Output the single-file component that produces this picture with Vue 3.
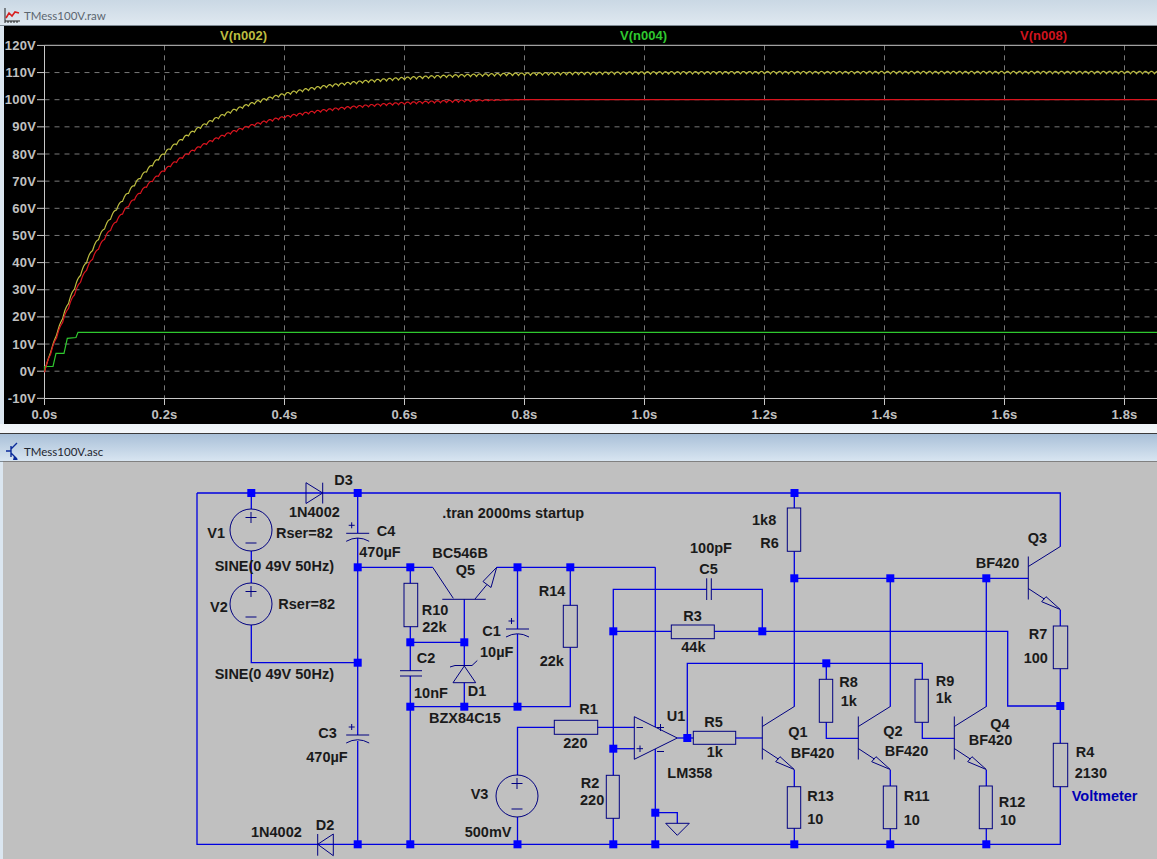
<template>
  <div class="desktop">
    <section class="win plot-win">
      <header class="titlebar">
        <svg class="ticon" viewBox="0 0 16 16" width="16" height="16">
          <path d="M1 1V14H16M1 14v2M4 14v2M7 14v2M10 14v2M13 14v2" fill="none" stroke="#222" stroke-width="1" />
          <path d="M2 11L5 6l3 3 3-4 4 1" fill="none" stroke="#d81e1e" stroke-width="1.6" />
        </svg>
        <span class="title dim">TMess100V.raw</span>
      </header>
      <div class="body plot-body">
        <svg class="canvas" viewBox="4 26 1153 398" width="1153" height="398">
          <g class="grid">
            <line v-for="v in gridVolts" :key="v" x1="44.5" x2="1157" :y1="vy(v)" :y2="vy(v)" />
            <line v-for="t in timeTicks.slice(1)" :key="t" :x1="tx(t)" :x2="tx(t)" y1="45.3" y2="398.5" />
          </g>
          <g class="axis">
            <line x1="44.5" x2="1157" y1="45.3" y2="45.3" />
            <line x1="44.5" x2="1157" y1="398.5" y2="398.5" />
            <line x1="44.5" x2="44.5" y1="45.3" y2="398.5" />
            <line v-for="v in allVolts" :key="v" x1="37" x2="44.5" :y1="vy(v)" :y2="vy(v)" />
            <line v-for="t in timeTicks" :key="t" :x1="tx(t)" :x2="tx(t)" y1="398.5" y2="405" />
          </g>
          <text v-for="v in allVolts" :key="v" class="lbl" x="36" :y="vy(v) + 4.5" text-anchor="end">{{ v }}V</text>
          <text v-for="t in timeTicks" :key="t" class="lbl" :x="tx(t)" y="418.5" text-anchor="middle">{{ t.toFixed(1) }}s</text>
          <polyline class="trace" :points="tracePts(110, 0.153, 0.9, false)" stroke="#bcbc40" />
          <polyline class="trace" points="44.5,371 44.5,366.5 53,366.5 56,353.3 64,353.3 67.3,338.3 76,337.5 78,332.3 1157,332.3" stroke="#2fc82f" />
          <polyline class="trace" :points="tracePts(100.5, 0.15, 0.8, true)" stroke="#d8141e" />
          <text class="sig" x="220" y="40" fill="#bcbc40">V(n002)</text>
          <text class="sig" x="620" y="40" fill="#2fc82f">V(n004)</text>
          <text class="sig" x="1020" y="40" fill="#d0141e">V(n008)</text>
        </svg>
      </div>
    </section>

    <section class="win sch-win">
      <header class="titlebar active">
        <svg class="ticon" viewBox="0 0 16 18" width="16" height="18">
          <path d="M2 9h5M7 4v11M7 7l6-6M7 11l6 6" fill="none" stroke="#0a2a9a" stroke-width="1.4" />
          <path d="M10 14l4 4-5 0z" fill="#0a2a9a" />
        </svg>
        <span class="title">TMess100V.asc</span>
      </header>
      <div class="body sch-body">
        <svg class="canvas" viewBox="3 462 1154 397" width="1154" height="397">
          <g class="wires">
            <polyline v-for="w in wires" :key="w" :points="w" />
          </g>
          <g class="sym">
            <rect v-for="r in resistors" :key="r.join()" :x="r[0]" :y="r[1]" :width="r[2]" :height="r[3]" />
            <circle v-for="s in sources" :key="s[1]" :cx="s[0]" :cy="s[1]" r="21" />
            <path v-for="s in sources" :key="s[1]" :d="sourceMarks(s)" />
            <path v-for="c in polarCaps" :key="c[1]" :d="capMarks(c)" />
            <path v-for="q in bipolars" :key="q[0]" :d="bipolarPath(q)" />
            <!-- Q5 is the only pnp, drawn by hand -->
            <path d="M442.3 599.3H485.7M432.7 567.3L453.3 598.3M475 599L487 584.5" />
            <polygon points="496.7,567.3 483,581.5 491,587.5" />
            <!-- diodes D3 D2, zener D1 -->
            <path d="M306 482.7V503.5L322.7 493ZM322.7 482.7V503.5" />
            <path d="M333.3 834V855.7L317.7 844.3ZM317.7 834V855.7" />
            <path d="M453 682.7H475.7L464.3 666ZM450 667L455 665.5H472L477.3 660.5" />
            <!-- non polar caps C2, C5 -->
            <path d="M400 670.7H422M400 676H422M706.7 578.3V600M711.3 578.3V600" />
            <!-- op amp -->
            <polygon points="634.3,716.7 634.3,759.3 677.3,738" />
            <path d="M636.5 727.5H643M636.5 748.7H643M640 745.5V752M657 727.5H664M660.5 724V731M657 751.5H664" />
            <!-- ground -->
            <polygon points="665.7,823.3 689.3,823.3 677.3,835.3" />
          </g>
          <g class="dots">
            <rect v-for="j in junctions" :key="j.join()" :x="j[0] - 4" :y="j[1] - 4" width="8" height="8" />
          </g>
          <text v-for="t in labels" :key="t.join()" class="part" :x="t[1]" :y="t[2]">{{ t[0] }}</text>
          <text class="part net" x="1071.7" y="800.7">Voltmeter</text>
        </svg>
      </div>
    </section>
  </div>
</template>

<script setup>
const allVolts = [120, 110, 100, 90, 80, 70, 60, 50, 40, 30, 20, 10, 0, -10]
const gridVolts = allVolts.slice(1, -1)
const timeTicks = [0, 0.2, 0.4, 0.6, 0.8, 1.0, 1.2, 1.4, 1.6, 1.8]

const vy = (v) => 371.2 - v * 2.715
const tx = (t) => 44.5 + t * 600

// rc charge curve with 100Hz rectifier ripple; the regulated one clamps flat
function tracePts(vmax, tau, ripple, clamp) {
  const pts = []
  for (let px = 0; px <= 1113; px += 0.5) {
    const t = px / 600
    let v = vmax * (1 - Math.exp(-t / tau))
    const wave = Math.abs(Math.sin(2 * Math.PI * 50 * t)) - 0.5
    if (clamp) {
      v = Math.min(100, v + wave * ripple * Math.min(1, (100 - v) / 0.5))
    } else {
      v += wave * ripple * Math.min(1, t * 30)
    }
    pts.push(`${(44.5 + px).toFixed(1)},${vy(v).toFixed(1)}`)
  }
  return pts.join(' ')
}

const wires = [
  '197,493 1060.3,493 1060.3,546.7',
  '197,493 197,844.3 1060.3,844.3 1060.3,786.7',
  '251.3,493 251.3,509', '251.3,551 251.3,583', '251.3,625 251.3,662.7 357.7,662.7',
  '357.7,493 357.7,533', '357.7,538 357.7,735', '357.7,741 357.7,844.3',
  '357.7,567.3 432.7,567.3', '496.7,567.3 655.3,567.3',
  '410.3,567.3 410.3,583.3', '410.3,626.7 410.3,670.7', '410.3,676 410.3,844.3',
  '410.3,642.3 464.3,642.3', '464.3,599.3 464.3,666', '464.3,682.7 464.3,706.7',
  '410.3,706.7 570.3,706.7 570.3,647.3', '570.3,605.3 570.3,567.3',
  '517.5,567.3 517.5,629', '517.5,634 517.5,706.7',
  '655.3,567.3 655.3,727', '655.3,749 655.3,844.3', '655.3,812.7 677.3,812.7 677.3,823.3',
  '517.5,775 517.5,727.3 554.3,727.3', '597.7,727.3 634.3,727.3', '517.5,817 517.5,844.3',
  '613.3,748.7 634.3,748.7', '613.3,775.3 613.3,589.3 706.7,589.3', '613.3,818.3 613.3,844.3',
  '711.3,589.3 762.3,589.3 762.3,631.3',
  '613.3,631.3 671.3,631.3', '714.3,631.3 1007.7,631.3 1007.7,706 1060.3,706',
  '1060.3,610 1060.3,626', '1060.3,668.7 1060.3,743.3',
  '794.3,493 794.3,508', '794.3,551.3 794.3,706.7', '794.3,770 794.3,786.7', '794.3,828.3 794.3,844.3',
  '794.3,578.3 1028.3,578.3',
  '890.3,578.3 890.3,706.7', '890.3,770 890.3,786', '890.3,828.7 890.3,844.3',
  '986.3,578.3 986.3,706.7', '986.3,770 986.3,786', '986.3,828.7 986.3,844.3',
  '687.3,738 687.3,663.3 922.3,663.3 922.3,679.3', '826.3,663.3 826.3,679.3',
  '826.3,722.3 826.3,738.3 858.3,738.3', '922.3,722.3 922.3,738.3 954.3,738.3',
  '677.3,738 693.3,738', '735.7,738 762.3,738',
]

const junctions = [
  [251.3, 493], [357.7, 493], [794.5, 493], [357.7, 567.3], [410.3, 567.3], [517.5, 567.3], [570.3, 567.3],
  [794.3, 578.3], [890.3, 578.3], [986.3, 578.3], [613.3, 631.3], [762.3, 631.3], [410.3, 642.3], [464.3, 642.3],
  [357.7, 662.7], [826.3, 663.3], [410.3, 706.7], [464.3, 706.7], [517.5, 706.7], [1060.3, 706], [687.3, 738],
  [613.3, 748.7], [655.3, 812.7], [357.7, 844.3], [410.3, 844.3], [517.5, 844.3], [613.3, 844.3], [655.3, 844.3],
  [794.3, 844.3], [890.3, 844.3], [986.3, 844.3],
]

// x, y, w, h
const resistors = [
  [404, 583.3, 13.7, 43.4], [563.3, 605.3, 14, 42], [554.3, 720.3, 43.4, 14], [606.3, 775.3, 13, 43],
  [671.3, 625, 43, 13.7], [693.3, 731.3, 42.4, 13], [787.3, 508, 13.4, 43.3], [1053.3, 626, 14.4, 42.7],
  [819.3, 679.3, 13.4, 43], [915, 679.3, 13.3, 43], [787.3, 786.7, 13.4, 41.6], [883.3, 786, 13.4, 42.7],
  [979.3, 786, 13, 42.7], [1053.3, 743.3, 14.4, 43.4],
]

const sources = [[251, 530], [251, 604], [517, 796]]
const polarCaps = [[357.7, 533.3], [357.7, 735], [517.5, 629]]
const bipolars = [[762.3, 738], [858.3, 738], [954.3, 738], [1028.3, 578]]

function sourceMarks([x, y]) {
  const plus = y - 12.5
  const minus = y + 13
  return `M${x - 5.5} ${plus}H${x + 5.5}M${x} ${plus - 5.5}V${plus + 5.5}M${x - 5.5} ${minus}H${x + 5.5}`
}

function capMarks([x, y]) {
  return `M${x - 11.5} ${y}H${x + 11.5}M${x - 11.5} ${y + 8}Q${x} ${y + 1.5} ${x + 11.5} ${y + 8}` +
    `M${x - 9} ${y - 8}H${x - 3}M${x - 6} ${y - 11}V${y - 5}`
}

function bipolarPath([x, y]) {
  return `M${x} ${y - 21.5}V${y + 21.5}M${x} ${y - 11.5}L${x + 32} ${y - 31.5}M${x} ${y + 10.5}L${x + 16} ${y + 21}` +
    `M${x + 32} ${y + 31.5}L${x + 13.4} ${y + 23.7}L${x + 17.7} ${y + 18.7}Z`
}

// text, x, baseline
const labels = [
  ['D3', 334.3, 484.7], ['1N4002', 289, 516.7], ['V1', 207.3, 538.3], ['Rser=82', 276, 538.3],
  ['C4', 376.7, 535.7], ['470µF', 359.3, 557.3], ['.tran 2000ms startup', 442.3, 518.3],
  ['BC546B', 432.3, 557.7], ['Q5', 455.7, 575], ['SINE(0 49V 50Hz)', 214.7, 571], ['V2', 210, 611.7],
  ['Rser=82', 278.3, 609.3], ['R10', 421.7, 615], ['22k', 422.3, 631.7], ['C1', 482.3, 636],
  ['10µF', 480, 656.7], ['C2', 416.7, 662.7], ['SINE(0 49V 50Hz)', 214.7, 679], ['10nF', 414, 698.3],
  ['D1', 467.7, 695.7], ['BZX84C15', 429, 722.7], ['C3', 318.3, 738.3], ['470µF', 306.3, 762.3],
  ['V3', 470.7, 799.3], ['500mV', 464.7, 836.7], ['1N4002', 251, 836.7], ['D2', 315.7, 830],
  ['R14', 538.7, 595.7], ['22k', 539.7, 666], ['100pF', 690, 552.7], ['C5', 699.3, 574],
  ['R3', 683.3, 621], ['44k', 681.3, 651.7], ['R6', 760.3, 548.3], ['1k8', 752, 525],
  ['R1', 579.3, 714], ['220', 563.3, 748], ['U1', 666.7, 720.7], ['R5', 704.3, 726.7], ['1k', 706.7, 757.3],
  ['LM358', 667.3, 777.7], ['R2', 580.7, 787.7], ['220', 580, 804.7], ['Q1', 788.3, 736.7],
  ['BF420', 790.7, 758.3], ['R13', 807.3, 800.7], ['10', 807.3, 824.3], ['R8', 839.3, 686.7],
  ['1k', 840.7, 705.7], ['R9', 935.7, 685.7], ['1k', 935.7, 702.7], ['Q2', 883.3, 735.7],
  ['BF420', 884.7, 756], ['Q4', 990.3, 728.7], ['BF420', 968.7, 744.7], ['R11', 903.7, 800.7],
  ['10', 903.7, 825], ['R12', 998.7, 806.7], ['10', 1000, 825], ['R4', 1075.7, 756.7],
  ['2130', 1074.7, 777.7], ['Q3', 1027.7, 542.7], ['BF420', 975.7, 567.7], ['R7', 1028.7, 638.7],
  ['100', 1023.7, 662.7],
]
</script>

<style scoped>
.desktop {
  width: 1157px;
  height: 859px;
  overflow: hidden;
  display: flex;
  flex-direction: column;
  background: #dbe6f0;
}

.win {
  display: flex;
  flex-direction: column;
}

.plot-win {
  height: 434px;
  flex: none;
  padding-bottom: 9px;
  box-sizing: border-box;
  border-bottom: 1px solid #3a3a3a;
  background: linear-gradient(#eef3f7, #f4f7fa);
  background-size: 100% 9px;
  background-position: bottom;
  background-repeat: no-repeat;
}

.sch-win {
  flex: 1;
  min-height: 0;
}

.titlebar {
  height: 26px;
  flex: none;
  box-sizing: border-box;
  display: flex;
  align-items: center;
  gap: 4px;
  padding: 5px 0 0 4px;
  border-bottom: 1px solid #7e8a94;
  background: linear-gradient(#cad8e4, #dfe8f0);
}

.titlebar.active {
  height: 28px;
  padding-top: 7px;
  background: linear-gradient(#a9c0d8, #d8e5f1);
}

.ticon {
  flex: none;
}

.title {
  font: 11.5px Lato, sans-serif;
  color: #1e2630;
}

.title.dim {
  color: #5c6670;
}

.body {
  flex: 1;
  min-height: 0;
  overflow: hidden;
}

.plot-body {
  margin-left: 4px;
  background: #000;
}

.sch-body {
  margin-left: 3px;
  background: #c0c0c0;
  border-top: 1px solid #808080;
  margin-top: -1px;
}

.canvas {
  display: block;
}

.grid line {
  stroke: #787878;
  stroke-width: 1;
  stroke-dasharray: 5 5;
}

.axis line {
  stroke: #c8c8c8;
  stroke-width: 1;
}

.lbl {
  font: bold 13px "Liberation Sans", sans-serif;
  letter-spacing: 0.2px;
  fill: #c0c0c0;
}

.sig {
  font: bold 13px "Liberation Sans", sans-serif;
}

.trace {
  fill: none;
  stroke-width: 1.2;
}

.wires polyline {
  fill: none;
  stroke: #0000e0;
  stroke-width: 1.3;
}

.sym * {
  fill: none;
  stroke: #000080;
  stroke-width: 1;
}

.dots rect {
  fill: #0000ff;
}

.part {
  font: bold 14.5px "Liberation Sans", sans-serif;
  fill: #1a1a1a;
}

.part.net {
  fill: #0000b4;
}
</style>

<style>
body {
  background: #dbe6f0;
}
</style>
